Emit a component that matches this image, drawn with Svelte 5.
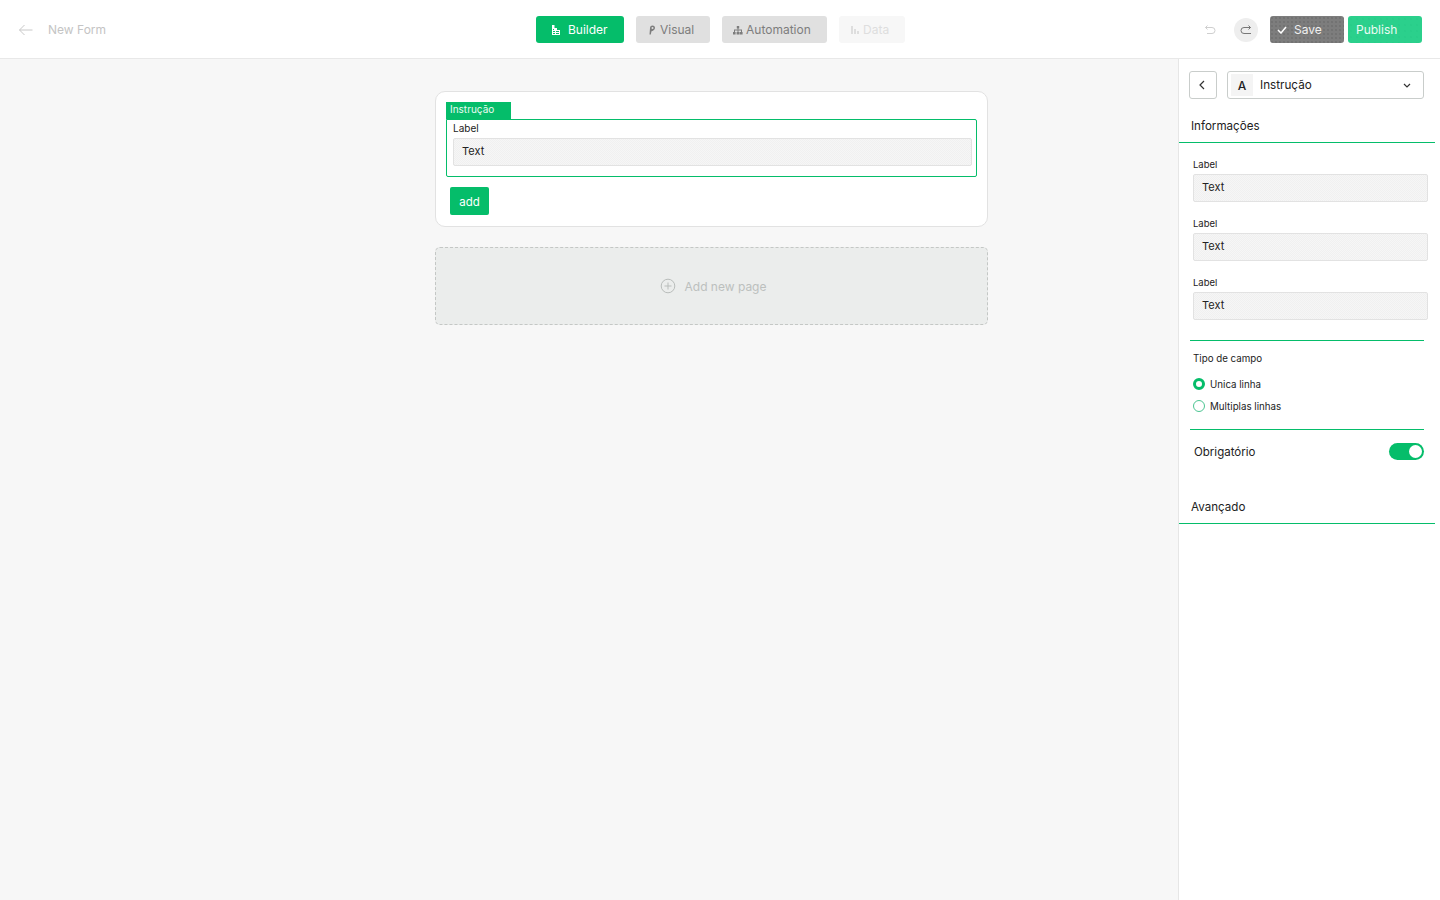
<script lang="ts">
	const tabs = [
		{ name: 'Builder', kind: 'active', icon: 'builder' },
		{ name: 'Visual', kind: 'idle', icon: 'visual' },
		{ name: 'Automation', kind: 'idle', icon: 'automation' },
		{ name: 'Data', kind: 'off', icon: 'data' }
	];
	const fields = ['Text', 'Text', 'Text'];
</script>

<div class="page">
	<header class="topbar">
		<div class="left">
			<svg class="back" width="16" height="12" viewBox="0 0 16 12" fill="none" stroke="#c8c8c8" stroke-width="1">
				<path d="M14.5 6H1.5M6.5 1L1.5 6l5 5" />
			</svg>
			<span class="title">New Form</span>
		</div>

		<nav class="tabs">
			{#each tabs as tab}
				<button class="tab {tab.kind} {tab.icon}">
					<svg width="10" height="10" viewBox="0 0 10 10" fill="currentColor">
						{#if tab.icon === 'builder'}
							<path d="M1 0h2.500v3H6v2h3v5H1zM2 4v1h1V4zM2 6v1h2V6zm3 0v1h3V6zM2 8v1h2V8zm3 0v1h3V8z" fill-rule="evenodd" />
						{:else if tab.icon === 'visual'}
							<path d="M5.500 0.500a2.500 2.500 0 0 1 2.500 2.500C8 5 5.500 6 4.500 6.300L3.800 9.500H2.500L3 3A2.500 2.500 0 0 1 5.500 0.500zM5.500 2a1 1 0 1 0 0 2 1 1 0 0 0 0-2z" fill-rule="evenodd" />
						{:else if tab.icon === 'automation'}
							<path d="M3.800 1h2.400v2.400H5.400V4.600H9V7H9.600V9.500H6.800V7h1.200V5.600H5.500V7h.9V9.500H3.600V7h.9V5.600H2V7h.6V9.500H0V7h1V4.600H4.600V3.400H3.800z" />
						{:else}
							<path d="M1 1h2v8H1zM4 4h2v5H4zM7 6h2v3H7z" />
						{/if}
					</svg>
					<span>{tab.name}</span>
				</button>
			{/each}
		</nav>

		<div class="actions">
			<svg class="undo" width="12" height="12" viewBox="0 0 12 12" fill="none" stroke="#cfcfcf" stroke-width="1">
				<path d="M3.500 1.500L1.500 3.500l2 2M1.500 3.500H8a2.800 2.800 0 0 1 0 6H3" />
			</svg>
			<span class="redo">
				<svg width="12" height="12" viewBox="0 0 12 12" fill="none" stroke="#777" stroke-width="1">
					<path d="M8.500 1.500l2 2-2 2M10.500 3.500H4a2.800 2.800 0 0 0 0 6h7" />
				</svg>
			</span>
			<button class="save">
				<svg width="10" height="8" viewBox="0 0 10 8" fill="none" stroke="#fff" stroke-width="1.500">
					<path d="M1 4l3 3 5-6" />
				</svg>
				<span>Save</span>
			</button>
			<button class="publish">Publish</button>
		</div>
	</header>

	<div class="body">
		<main class="canvas">
			<section class="card">
				<div class="tag">Instrução</div>
				<div class="frame">
					<div class="frame-label">Label</div>
					<div class="input">Text</div>
				</div>
				<button class="add">add</button>
			</section>

			<button class="new-page">
				<svg width="16" height="16" viewBox="0 0 16 16" fill="none" stroke="#b9bdbb" stroke-width="1">
					<circle cx="8" cy="8" r="6.800" />
					<path d="M8 4.500v7M4.500 8h7" />
				</svg>
				<span>Add new page</span>
			</button>
		</main>

		<aside class="panel">
			<div class="panel-head">
				<button class="square" aria-label="Voltar">
					<svg width="6" height="10" viewBox="0 0 6 10" fill="none" stroke="#333" stroke-width="1.200">
						<path d="M5 1L1 5l4 4" />
					</svg>
				</button>
				<div class="select">
					<span class="glyph">A</span>
					<span class="select-name">Instrução</span>
					<svg width="8" height="5" viewBox="0 0 8 5" fill="none" stroke="#333" stroke-width="1.200">
						<path d="M1 1l3 3 3-3" />
					</svg>
				</div>
			</div>

			<h2 class="section first">Informações</h2>

			<div class="fields">
				{#each fields as value}
					<div class="field">
						<div class="field-label">Label</div>
						<div class="input wide">{value}</div>
					</div>
				{/each}
			</div>

			<hr class="rule" />

			<div class="type">
				<div class="type-title">Tipo de campo</div>
				<label class="radio"><span class="dot checked"></span>Unica linha</label>
				<label class="radio"><span class="dot"></span>Multiplas linhas</label>
			</div>

			<hr class="rule" />

			<div class="required">
				<span>Obrigatório</span>
				<span class="toggle"><span class="knob"></span></span>
			</div>

			<h2 class="section last">Avançado</h2>
		</aside>
	</div>
</div>

<style>
	:global(body) {
		margin: 0;
		font-family: Inter, 'Liberation Sans', sans-serif;
		color: #222;
	}

	button {
		font-family: inherit;
		border: 0;
		padding: 0;
		cursor: pointer;
	}

	.page {
		height: 900px;
		display: flex;
		flex-direction: column;
		overflow: hidden;
		background: #f7f7f7;
	}

	.topbar {
		height: 58px;
		flex: none;
		display: grid;
		grid-template-columns: 1fr auto 1fr;
		align-items: center;
		padding: 0 18px;
		background: #fff;
		border-bottom: 1px solid #e8e8e8;
	}

	.left {
		display: flex;
		align-items: center;
		gap: 14px;
	}

	.back {
		margin-top: 1px;
	}

	.title {
		font-size: 12px;
		color: #c4c4c4;
	}

	.tabs {
		display: flex;
		gap: 12px;
		margin: 1px 0 0 1px;
	}

	.tab {
		height: 27px;
		display: flex;
		align-items: center;
		box-sizing: border-box;
		border-radius: 3px;
		font-size: 12px;
		gap: 3px;
		padding-left: 11px;
	}

	.tab.active {
		background: #05bd6a;
		color: #fff;
		padding-left: 15px;
		gap: 7px;
	}

	.tab.idle {
		background: #e0e0e0;
		color: #7d7d7d;
	}

	.tab.off {
		background: #f7f7f7;
		color: #dedede;
	}

	.tab.builder {
		width: 88px;
	}

	.tab.visual {
		width: 74px;
	}

	.tab.automation {
		width: 105px;
	}

	.tab.data {
		width: 66px;
	}

	.actions {
		display: flex;
		align-items: center;
		justify-content: flex-end;
		margin-top: 1px;
	}

	.undo {
		margin-right: 18px;
	}

	.redo {
		width: 24px;
		height: 24px;
		border-radius: 50%;
		background: #eeeeee;
		display: flex;
		align-items: center;
		justify-content: center;
		margin-right: 12px;
	}

	.save {
		width: 74px;
		height: 27px;
		display: flex;
		align-items: center;
		gap: 7px;
		padding-left: 7px;
		box-sizing: border-box;
		border-radius: 3px;
		font-size: 12px;
		color: #f0f0f0;
		background: #7d7d7d radial-gradient(circle, #666 0.6px, transparent 0.8px) 0 0 / 4px 4px;
		margin-right: 4px;
	}

	.publish {
		width: 74px;
		height: 27px;
		border-radius: 3px;
		font-size: 12px;
		color: #eafbf3;
		background: #2bd08c radial-gradient(circle, #22c683 0.5px, transparent 0.8px) 0 0 / 6px 6px;
		text-align: left;
		padding-left: 8px;
		box-sizing: border-box;
	}

	.body {
		flex: 1;
		display: flex;
		min-height: 0;
	}

	.canvas {
		width: 1178px;
		flex: none;
		display: flex;
		flex-direction: column;
		align-items: flex-start;
		padding: 32px 0 0 435px;
		box-sizing: border-box;
		gap: 20px;
	}

	.card {
		width: 553px;
		height: 136px;
		box-sizing: border-box;
		background: #fff;
		border: 1px solid #e2e2e2;
		border-radius: 10px;
		padding: 10px 10px 0;
	}

	.tag {
		width: 65px;
		height: 17px;
		box-sizing: border-box;
		padding-left: 4px;
		background: #05bd6a;
		color: #eafbf3;
		font-size: 10px;
		line-height: 15px;
	}

	.frame {
		height: 58px;
		box-sizing: border-box;
		border: 1px solid #05bd6a;
		border-radius: 0 2px 2px 2px;
		padding: 1px 4px 0 6px;
	}

	.frame-label {
		font-size: 10px;
		line-height: 14px;
		height: 17px;
	}

	.input {
		height: 28px;
		box-sizing: border-box;
		border: 1px solid #e2e2e2;
		border-radius: 2px;
		padding-left: 8px;
		font-size: 11px;
		line-height: 24px;
		background: repeating-conic-gradient(#f0f0f0 0 25%, #f6f6f6 0 50%) 0 0 / 2px 2px;
	}

	.add {
		display: block;
		width: 39px;
		height: 28px;
		margin: 10px 0 0 4px;
		padding-top: 2px;
		background: #05bd6a;
		color: #fff;
		font-size: 11.500px;
		border-radius: 2px;
	}

	.new-page {
		width: 553px;
		height: 78px;
		display: flex;
		align-items: center;
		justify-content: center;
		gap: 9px;
		padding-left: 3px;
		box-sizing: border-box;
		background: #ebedec;
		border: 1px dashed #c4c7c5;
		border-radius: 5px;
		font-size: 12px;
		color: #bcc0be;
	}

	.panel {
		width: 262px;
		flex: none;
		box-sizing: border-box;
		background: #fff;
		border-left: 1px solid #e6e6e6;
		padding-top: 12px;
	}

	.panel-head {
		display: flex;
		gap: 10px;
		padding-left: 10px;
	}

	.square {
		width: 28px;
		height: 28px;
		background: #fff;
		border: 1px solid #c9cdcb;
		border-radius: 3px;
		padding-right: 2px;
		display: flex;
		align-items: center;
		justify-content: center;
	}

	.select {
		width: 197px;
		height: 28px;
		box-sizing: border-box;
		border: 1px solid #c9cdcb;
		border-radius: 3px;
		display: flex;
		align-items: center;
		padding: 0 12px 0 3px;
		font-size: 11.700px;
	}

	.glyph {
		width: 22px;
		height: 22px;
		background: #f4f4f4;
		font-weight: 500;
		font-size: 12px;
		line-height: 24px;
		text-align: center;
		margin-right: 7px;
	}

	.select-name {
		flex: 1;
	}

	.section {
		width: 256px;
		box-sizing: border-box;
		margin: 0;
		padding-left: 12px;
		font-size: 11.600px;
		font-weight: 400;
		line-height: 15px;
	}

	.section.first {
		margin-top: 20px;
		padding-bottom: 8px;
		border-bottom: 1px solid #05bd6a;
	}

	.section.last {
		margin-top: 39px;
		padding-bottom: 8px;
		border-bottom: 1px solid #05bd6a;
	}

	.fields {
		padding: 16px 7px 0 14px;
		display: flex;
		flex-direction: column;
		gap: 16px;
		width: 248px;
		box-sizing: content-box;
	}

	.field-label {
		font-size: 9.500px;
		line-height: 12px;
		height: 15px;
	}

	.input.wide {
		width: 235px;
	}

	.rule {
		width: 234px;
		height: 1px;
		margin: 20px 0 0 11px;
		border: 0;
		background: #05bd6a;
	}

	.type {
		padding: 12px 0 0 14px;
		height: 76px;
		box-sizing: border-box;
		font-size: 9.750px;
		margin-bottom: -8px;
	}

	.type-title {
		line-height: 12px;
		margin-bottom: 13px;
	}

	.radio {
		display: flex;
		align-items: center;
		gap: 5px;
		height: 12px;
		margin-bottom: 10px;
	}

	.dot {
		width: 12px;
		height: 12px;
		box-sizing: border-box;
		border-radius: 50%;
		border: 1px solid #4cc592;
		background: #fff;
	}

	.dot.checked {
		border: 3px solid #05bd6a;
	}

	.required {
		display: flex;
		align-items: center;
		justify-content: space-between;
		width: 230px;
		margin: 13px 0 0 15px;
		height: 18px;
		font-size: 11.500px;
	}

	.toggle {
		width: 35px;
		height: 17px;
		margin-top: -1px;
		border-radius: 9px;
		background: #05bd6a;
		position: relative;
	}

	.knob {
		position: absolute;
		right: 2px;
		top: 2px;
		width: 13px;
		height: 13px;
		border-radius: 50%;
		background: #fff;
	}
</style>
